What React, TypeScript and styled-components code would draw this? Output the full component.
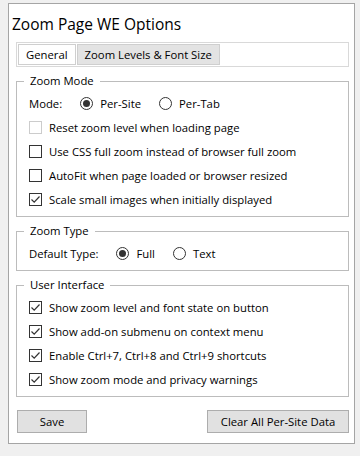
import React from "react"
import styled, { createGlobalStyle } from "styled-components"

const GlobalStyle = createGlobalStyle`
    html, body {
        margin: 0;
        padding: 0;
        background: #f0f0f0;
    }
    body {
        font-family: "Open Sans", "Noto Sans", sans-serif;
        font-size: 11.3px;
        color: #000;
    }
`

const Panel = styled.div`
    box-sizing: border-box;
    width: 347px;
    height: 441px;
    margin: 3px 0 0 8px;
    border: 1px solid #a5a5a5;
    background: #fff;
    padding: 0 5px 0 7px;
    display: flex;
    flex-direction: column;
`

const Title = styled.h1`
    margin: 0 0 0 -4px;
    padding: 9px 0 0;
    height: 38px;
    box-sizing: border-box;
    font-size: 15.5px;
    font-weight: 400;
    line-height: 22px;
`

const TabStrip = styled.div`
    display: flex;
    gap: 1px;
    height: 25px;
    box-sizing: border-box;
    border: 1px solid #d9d9d9;
    padding: 1px;
`

const Tab = styled.div<{ $active?: boolean }>`
    display: flex;
    align-items: center;
    padding: 0 7px;
    height: 21px;
    box-sizing: border-box;
    border: 1px solid #cfcfcf;
    background: ${p => p.$active ? "#fff" : "#e3e3e3"};
`

const Group = styled.fieldset<{ $top: number }>`
    margin: ${p => p.$top}px 0 0;
    padding: 2px 12px 5px;
    border: 1px solid #bcbcbc;
    min-width: 0;
`

const Legend = styled.legend`
    margin-left: -5px;
    padding: 0 6px;
    line-height: 16px;
`

const Row = styled.div`
    display: flex;
    align-items: center;
    gap: 18px;
    height: 24px;
`

const Option = styled.label`
    display: flex;
    align-items: center;
    gap: 7px;
    color: #000;
`

const RadioMark = styled.span<{ $checked?: boolean }>`
    box-sizing: border-box;
    width: 13px;
    height: 13px;
    border: 1px solid #333;
    border-radius: 50%;
    display: flex;
    align-items: center;
    justify-content: center;
    &::after {
        content: "";
        width: 7px;
        height: 7px;
        border-radius: 50%;
        background: ${p => p.$checked ? "#333" : "transparent"};
    }
`

const Box = styled.span<{ $disabled?: boolean }>`
    box-sizing: border-box;
    width: 13px;
    height: 13px;
    border: 1px solid ${p => p.$disabled ? "#cccccc" : "#333"};
    display: flex;
    align-items: center;
    justify-content: center;
`

const Buttons = styled.div`
    display: flex;
    justify-content: space-between;
    margin-top: 13px;
    padding: 0 0 0 1px;
`

const Button = styled.button<{ $width: number }>`
    width: ${p => p.$width}px;
    height: 23px;
    border: 1px solid #adadad;
    background: #e1e1e1;
    font-family: inherit;
    font-size: 11.3px;
    color: #000;
    padding: 0;
`

const Radio: React.FC<{ label: string, checked?: boolean }> = ({ label, checked }) => (
    <Option>
        <RadioMark $checked={checked} />
        {label}
    </Option>
)

const Check: React.FC<{ label: string, checked?: boolean, disabled?: boolean }> = ({ label, checked, disabled }) => (
    <Row>
        <Option>
            <Box $disabled={disabled}>
                {checked &&
                    <svg width="11" height="11" viewBox="0 0 11 11">
                        <path d="M1.5 5.5 L4.2 8.2 L9.5 2.5" fill="none" stroke="#333" strokeWidth="1.2" />
                    </svg>
                }
            </Box>
            {label}
        </Option>
    </Row>
)

export default function App() {
    return (
        <>
            <GlobalStyle />
            <Panel>
                <Title>Zoom Page WE Options</Title>
                <TabStrip>
                    <Tab $active>General</Tab>
                    <Tab>Zoom Levels &amp; Font Size</Tab>
                </TabStrip>

                <Group $top={6}>
                    <Legend>Zoom Mode</Legend>
                    <Row>
                        <span>Mode:</span>
                        <Radio label="Per-Site" checked />
                        <Radio label="Per-Tab" />
                    </Row>
                    <Check label="Reset zoom level when loading page" disabled />
                    <Check label="Use CSS full zoom instead of browser full zoom" />
                    <Check label="AutoFit when page loaded or browser resized" />
                    <Check label="Scale small images when initially displayed" checked />
                </Group>

                <Group $top={6}>
                    <Legend>Zoom Type</Legend>
                    <Row>
                        <span>Default Type:</span>
                        <Radio label="Full" checked />
                        <Radio label="Text" />
                    </Row>
                </Group>

                <Group $top={6}>
                    <Legend>User Interface</Legend>
                    <Check label="Show zoom level and font state on button" checked />
                    <Check label="Show add-on submenu on context menu" checked />
                    <Check label="Enable Ctrl+7, Ctrl+8 and Ctrl+9 shortcuts" checked />
                    <Check label="Show zoom mode and privacy warnings" checked />
                </Group>

                <Buttons>
                    <Button $width={70}>Save</Button>
                    <Button $width={142}>Clear All Per-Site Data</Button>
                </Buttons>
            </Panel>
        </>
    )
}
